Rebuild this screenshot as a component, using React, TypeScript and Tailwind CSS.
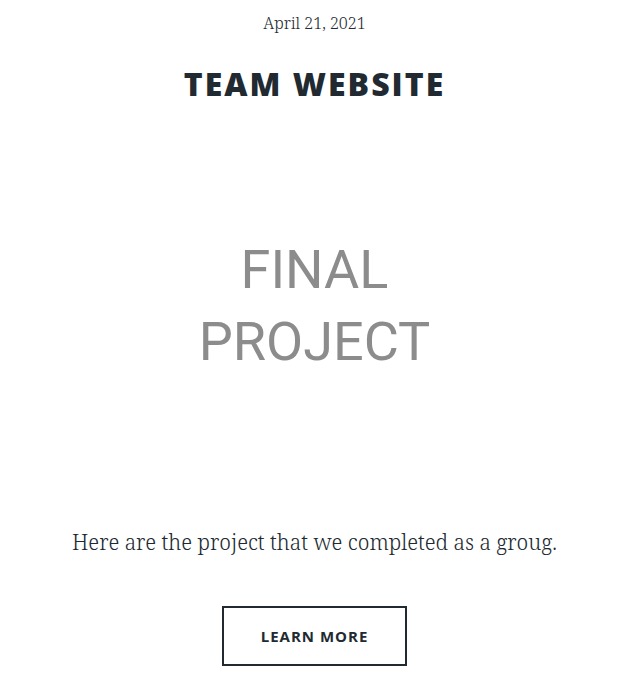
export default function App() {
  return (
    <main className="flex flex-col items-center bg-white pt-2 pr-1.5 text-center text-[#212931]">
      <header className="flex flex-col items-center">
        <time dateTime="2021-04-21" className="font-['Noto_Serif','Liberation_Serif',serif] text-[16px] leading-[30px] font-light">
          April 21, 2021
        </time>
        <h1 className="mt-5 font-['Open_Sans',sans-serif] text-[32px] leading-[52px] font-extrabold tracking-[2px]">
          TEAM WEBSITE
        </h1>
      </header>
      <div className="flex h-[392px] w-full flex-col items-center justify-center font-['Roboto','Liberation_Sans',sans-serif] text-[54px] leading-[72px] font-normal text-[#8c8c8c]">
        <span>FINAL</span>
        <span>PROJECT</span>
      </div>
      <p className="mt-5 font-['Noto_Serif','Liberation_Serif',serif] text-[21px] leading-10 font-light">
        Here are the project that we completed as a groug.
      </p>
      <a href="#project" className="mt-11 flex h-[60px] items-center border-2 border-[#212931] px-[37px] font-['Open_Sans',sans-serif] text-[15px] font-bold tracking-[1px]">
        LEARN MORE
      </a>
    </main>
  );
}
